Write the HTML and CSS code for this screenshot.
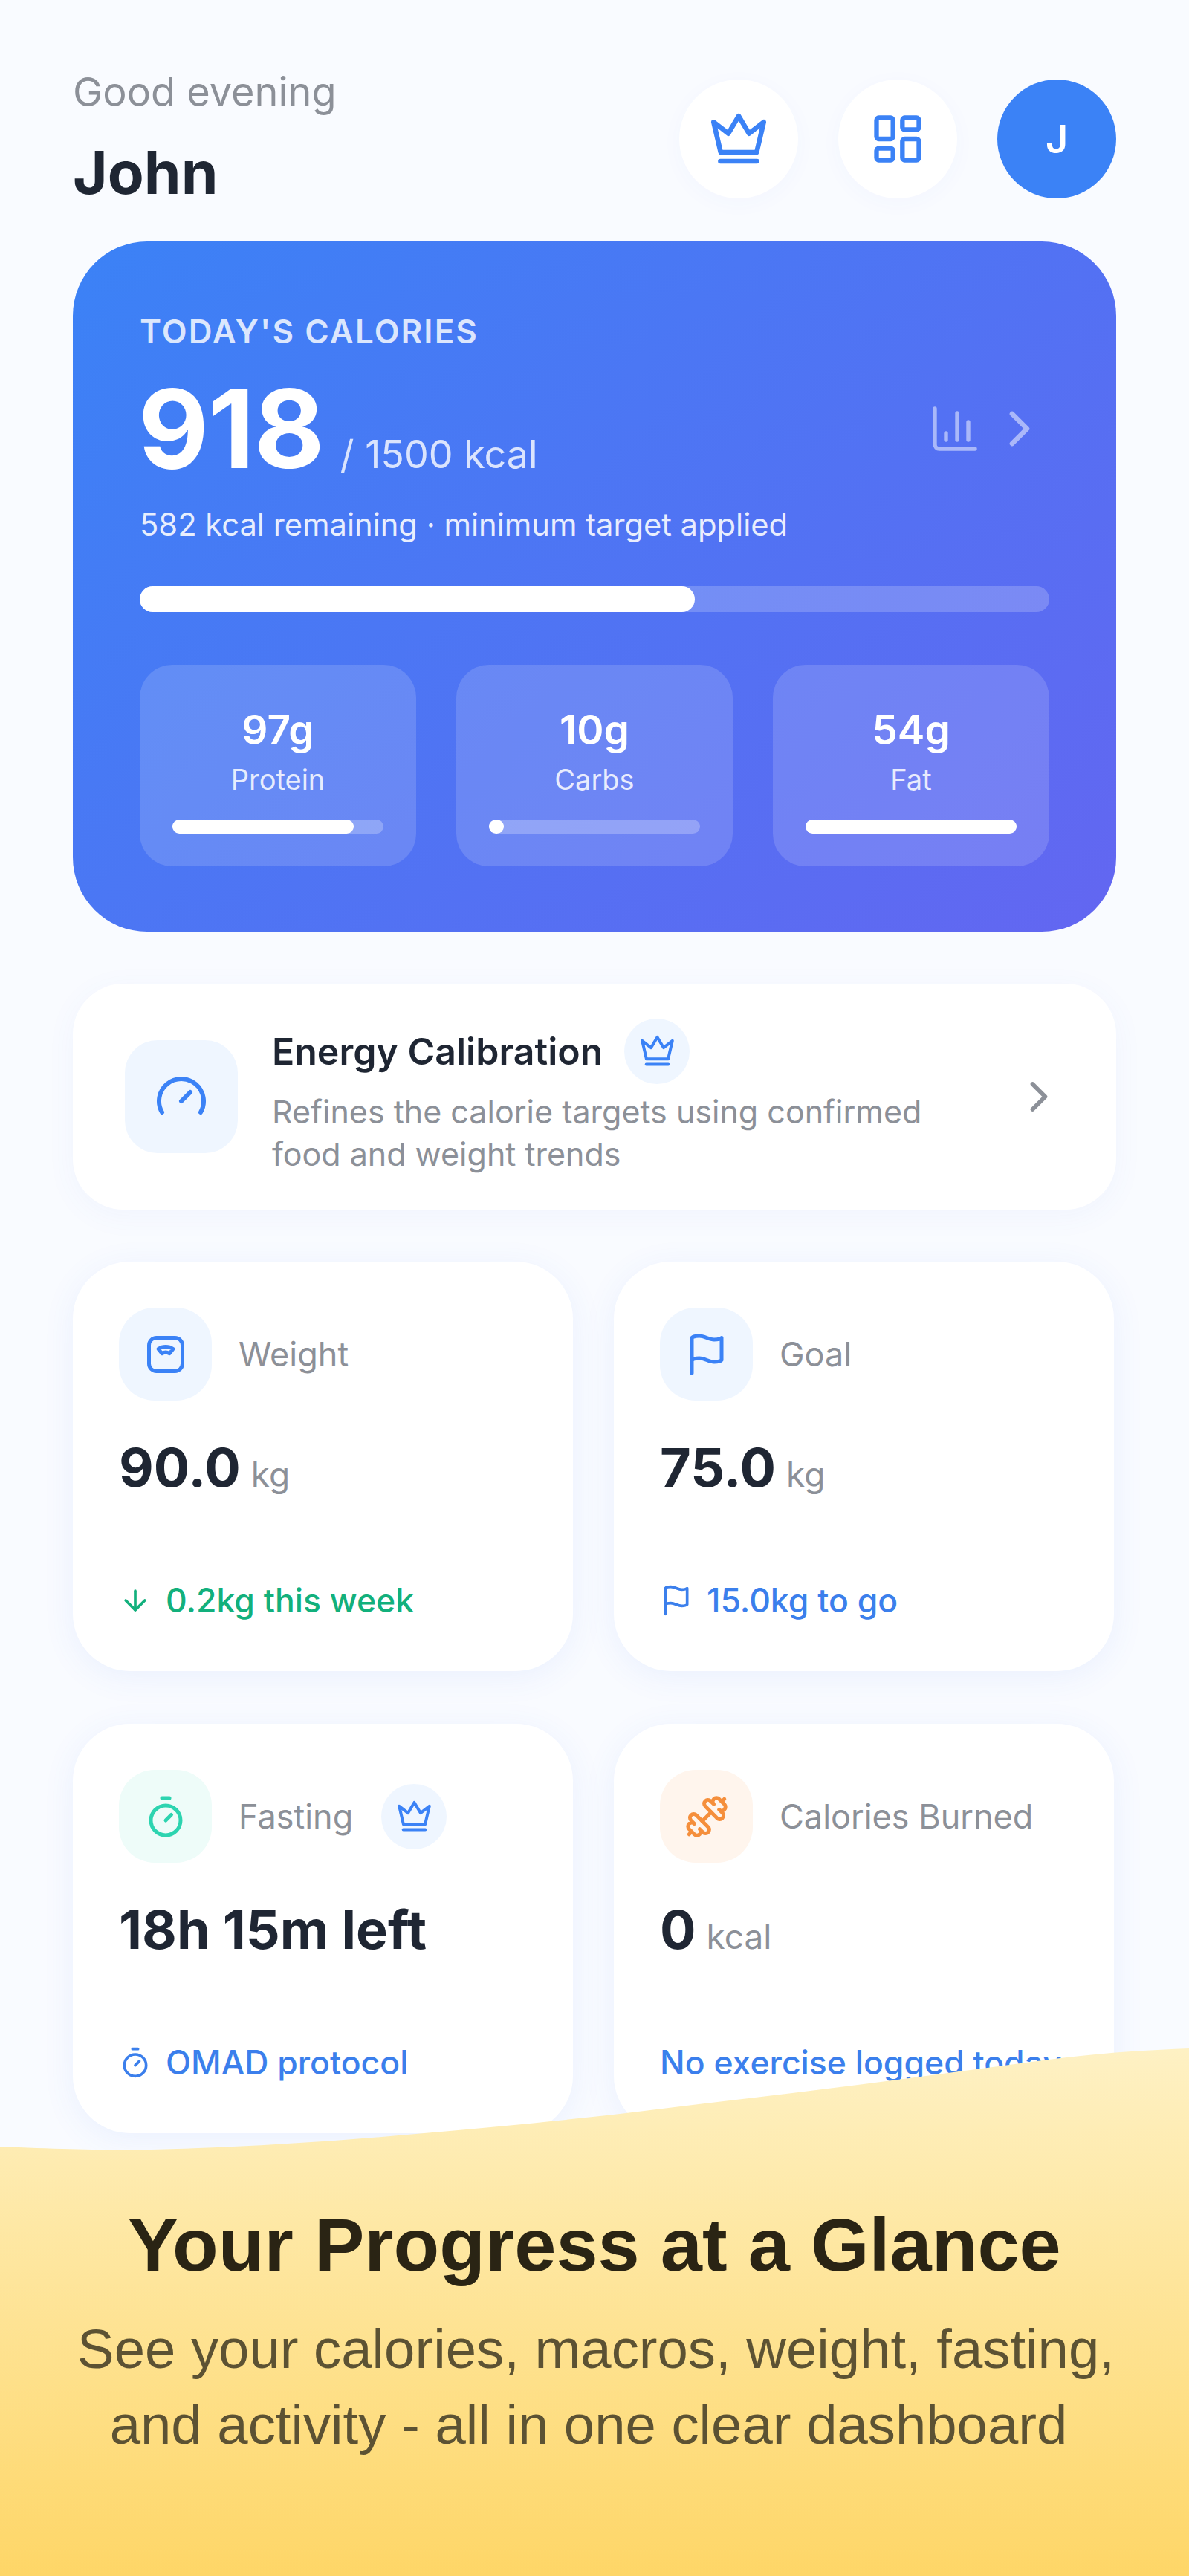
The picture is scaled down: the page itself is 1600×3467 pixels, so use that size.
FILE: index.html
```html
<!DOCTYPE html>
<html lang="en">
<head>
<meta charset="utf-8">
<title>Dashboard</title>
<link rel="stylesheet" href="styles.css">
</head>
<body>
<svg class="sprite" aria-hidden="true">
  <symbol id="i-crown" viewBox="0 0 24 24"><path d="M2.8 5.8 8.2 10 12 3.6 15.8 10l5.4-4.200-2.600 11.100H5.400Z"/><path d="M5.300 20.200h13.400"/></symbol>
  <symbol id="i-layout" viewBox="0 0 24 24"><rect x="3" y="3" width="7" height="9" rx="1"/><rect x="14" y="3" width="7" height="5" rx="1"/><rect x="14" y="12" width="7" height="9" rx="1"/><rect x="3" y="16" width="7" height="5" rx="1"/></symbol>
  <symbol id="i-chart" viewBox="0 0 24 24"><path d="M3 3v16a2 2 0 0 0 2 2h16"/><path d="M18 17V9"/><path d="M13 17V5"/><path d="M8 17v-3"/></symbol>
  <symbol id="i-chevron" viewBox="0 0 24 24"><path d="m9 18 6-6-6-6"/></symbol>
  <symbol id="i-gauge" viewBox="0 0 24 24"><path d="m12 14 4-4"/><path d="M3.340 19a10 10 0 1 1 17.320 0"/></symbol>
  <symbol id="i-scale" viewBox="0 0 24 24"><rect x="3" y="3" width="18" height="18" rx="4"/><path d="M8 9c2.400-1.600 5.600-1.600 8 0l-2 2.500c-1.200-.8-2.800-.8-4 0Z"/></symbol>
  <symbol id="i-flag" viewBox="0 0 24 24"><path d="M4 15s1-1 4-1 5 2 8 2 4-1 4-1V3s-1 1-4 1-5-2-8-2-4 1-4 1z"/><path d="M4 22v-7"/></symbol>
  <symbol id="i-arrow-down" viewBox="0 0 24 24"><path d="M12 5v14"/><path d="m19 12-7 7-7-7"/></symbol>
  <symbol id="i-timer" viewBox="0 0 24 24"><path d="M10 2h4"/><path d="m12 14 3-3"/><circle cx="12" cy="14" r="8"/></symbol>
  <symbol id="i-dumbbell" viewBox="0 0 24 24"><path d="M17.596 12.768a2 2 0 1 0 2.829-2.829l-1.768-1.767a2 2 0 0 0 2.828-2.829l-2.828-2.828a2 2 0 0 0-2.829 2.828l-1.767-1.768a2 2 0 1 0-2.829 2.829z"/><path d="m2.500 21.500 1.400-1.400"/><path d="m20.100 3.900 1.400-1.400"/><path d="M5.343 21.485a2 2 0 1 0 2.829-2.828l1.767 1.768a2 2 0 1 0 2.829-2.829l-6.364-6.364a2 2 0 1 0-2.829 2.829l1.768 1.767a2 2 0 0 0-2.828 2.829z"/><path d="m9.600 14.400 4.800-4.800"/></symbol>
</svg>

<div class="screen">
  <main class="content">
    <header class="top">
      <div class="hello">
        <p class="greeting">Good evening</p>
        <h1 class="name">John</h1>
      </div>
      <div class="top-actions">
        <button class="round-btn"><svg class="icon crown-lg"><use href="#i-crown"/></svg></button>
        <button class="round-btn"><svg class="icon layout-lg"><use href="#i-layout"/></svg></button>
        <div class="avatar">J</div>
      </div>
    </header>

    <section class="hero">
      <h2 class="hero-label">TODAY'S CALORIES</h2>
      <div class="hero-row">
        <div class="hero-count"><span class="hero-num">918</span><span class="hero-unit">/ 1500 kcal</span></div>
        <div class="hero-links">
          <svg class="icon hero-chart"><use href="#i-chart"/></svg>
          <svg class="icon hero-chevron"><use href="#i-chevron"/></svg>
        </div>
      </div>
      <p class="hero-note">582 kcal remaining · minimum target applied</p>
      <div class="hero-track"><div class="hero-fill" style="width:61%"></div></div>
      <div class="macros">
        <div class="macro">
          <span class="macro-val">97g</span><span class="macro-name">Protein</span>
          <div class="macro-track"><div class="macro-fill" style="width:86%"></div></div>
        </div>
        <div class="macro">
          <span class="macro-val">10g</span><span class="macro-name">Carbs</span>
          <div class="macro-track"><div class="macro-fill" style="width:7%"></div></div>
        </div>
        <div class="macro">
          <span class="macro-val">54g</span><span class="macro-name">Fat</span>
          <div class="macro-track"><div class="macro-fill" style="width:100%"></div></div>
        </div>
      </div>
    </section>

    <section class="calibration">
      <div class="cal-icon"><svg class="icon gauge"><use href="#i-gauge"/></svg></div>
      <div class="cal-text">
        <div class="cal-title-row">
          <h3 class="cal-title">Energy Calibration</h3>
          <span class="badge"><svg class="icon crown-sm"><use href="#i-crown"/></svg></span>
        </div>
        <p class="cal-desc">Refines the calorie targets using confirmed food and weight trends</p>
      </div>
      <svg class="icon cal-chevron"><use href="#i-chevron"/></svg>
    </section>

    <section class="stats">
      <article class="stat">
        <div class="stat-head">
          <span class="stat-icon tint-blue"><svg class="icon stat-glyph"><use href="#i-scale"/></svg></span>
          <span class="stat-label">Weight</span>
        </div>
        <p class="stat-value">90.0<span class="stat-unit">kg</span></p>
        <p class="stat-foot foot-green"><svg class="icon foot-glyph"><use href="#i-arrow-down"/></svg>0.2kg this week</p>
      </article>
      <article class="stat">
        <div class="stat-head">
          <span class="stat-icon tint-blue"><svg class="icon stat-glyph"><use href="#i-flag"/></svg></span>
          <span class="stat-label">Goal</span>
        </div>
        <p class="stat-value">75.0<span class="stat-unit">kg</span></p>
        <p class="stat-foot"><svg class="icon foot-glyph"><use href="#i-flag"/></svg>15.0kg to go</p>
      </article>
      <article class="stat">
        <div class="stat-head">
          <span class="stat-icon tint-teal"><svg class="icon stat-glyph"><use href="#i-timer"/></svg></span>
          <span class="stat-label">Fasting</span>
          <span class="badge"><svg class="icon crown-sm"><use href="#i-crown"/></svg></span>
        </div>
        <p class="stat-value">18h 15m left</p>
        <p class="stat-foot"><svg class="icon foot-glyph"><use href="#i-timer"/></svg>OMAD protocol</p>
      </article>
      <article class="stat">
        <div class="stat-head">
          <span class="stat-icon tint-orange"><svg class="icon stat-glyph"><use href="#i-dumbbell"/></svg></span>
          <span class="stat-label">Calories Burned</span>
        </div>
        <p class="stat-value">0<span class="stat-unit">kcal</span></p>
        <p class="stat-foot">No exercise logged today</p>
      </article>
    </section>
  </main>

  <aside class="promo">
    <h2 class="promo-title">Your Progress at a Glance</h2>
    <p class="promo-text">See your calories, macros, weight, fasting,<span class="promo-line">and activity - all in one clear dashboard</span></p>
  </aside>
</div>
</body>
</html>
```

FILE: styles.css
```css
* { box-sizing: border-box; }

html, body { margin: 0; padding: 0; }

body {
  font-family: Inter, "Noto Sans", sans-serif;
  background: #f9fbff;
  color: #1f2633;
}

h1, h2, h3, p { margin: 0; font-weight: inherit; font-size: inherit; }

.sprite { display: none; }

.icon {
  display: block;
  flex: none;
  fill: none;
  stroke: currentColor;
  stroke-width: 2;
  stroke-linecap: round;
  stroke-linejoin: round;
}

.screen {
  position: relative;
  width: 1600px;
  height: 3467px;
  overflow: hidden;
}

.content { padding: 94px 100px 0 98px; }

/* Greeting and top buttons */
.top { display: flex; justify-content: space-between; align-items: flex-start; margin-right: -2px; }
.greeting { font-size: 54px; line-height: 60px; color: #8c9098; }
.name { font-size: 80px; line-height: 96px; font-weight: 700; color: #1f2633; margin-top: 30px; }

.top-actions { display: flex; gap: 54px; margin-top: 13px; }

.round-btn {
  width: 160px;
  height: 160px;
  border: 0;
  padding: 0;
  border-radius: 50%;
  background: #fff;
  color: #3b82f6;
  display: flex;
  align-items: center;
  justify-content: center;
  box-shadow: 0 6px 30px rgba(70, 110, 240, .03);
}

.crown-lg { width: 88px; height: 88px; stroke-width: 1.800; }
.layout-lg { width: 76px; height: 76px; }

.avatar {
  width: 160px;
  height: 160px;
  border-radius: 50%;
  background: #3b82f6;
  color: #fff;
  font-size: 52px;
  font-weight: 600;
  display: flex;
  align-items: center;
  justify-content: center;
}

/* Calorie summary card */
.hero {
  margin: 45px -2px 0 0;
  height: 929px;
  padding: 93px 90px 87px;
  border-radius: 100px;
  background: linear-gradient(135deg, #3b82f6, #6366f1);
  color: #fff;
}

.hero-label {
  font-size: 44px;
  line-height: 56px;
  font-weight: 600;
  letter-spacing: 2.100px;
  color: rgba(255, 255, 255, .82);
}

.hero-row { display: flex; align-items: center; justify-content: space-between; margin-top: 18px; height: 170px; }
.hero-count { display: flex; align-items: baseline; gap: 22px; }
.hero-num { font-size: 146px; line-height: 170px; font-weight: 700; letter-spacing: -1px; margin-left: -2px; }
.hero-unit { font-size: 52px; color: rgba(255, 255, 255, .8); }

.hero-links { display: flex; align-items: center; gap: 11px; color: rgba(255, 255, 255, .5); }
.hero-chart { width: 72px; height: 72px; stroke-width: 1.800; }
.hero-chevron { width: 80px; height: 80px; }

.hero-note { font-size: 41.700px; line-height: 56px; margin-top: 16px; color: rgba(255, 255, 255, .88); }

.hero-track { height: 35px; margin-top: 55px; border-radius: 18px; background: rgba(255, 255, 255, .2); }
.hero-fill { height: 100%; border-radius: 18px; background: #fff; }

.macros { display: grid; grid-template-columns: repeat(3, 1fr); gap: 54px; margin-top: 71px; }

.macro {
  height: 271px;
  padding: 52px 44px 0;
  border-radius: 44px;
  background: rgba(255, 255, 255, .15);
  display: flex;
  flex-direction: column;
  align-items: center;
}

.macro-val { font-size: 55px; line-height: 70px; font-weight: 600; }
.macro-name { font-size: 38px; line-height: 48px; margin-top: 8px; color: rgba(255, 255, 255, .85); }
.macro-track { width: 100%; height: 19px; margin-top: 30px; border-radius: 10px; background: rgba(255, 255, 255, .25); }
.macro-fill { height: 100%; border-radius: 10px; background: #fff; }

/* Energy calibration row */
.calibration {
  display: flex;
  align-items: center;
  height: 304px;
  margin: 70px -2px 0 0;
  padding: 0 70px 0 70px;
  border-radius: 68px;
  background: #fff;
  box-shadow: 0 8px 40px rgba(70, 110, 240, .05);
}

.cal-icon {
  width: 152px;
  height: 152px;
  flex: none;
  border-radius: 44px;
  background: #eff6ff;
  color: #3b82f6;
  display: flex;
  align-items: center;
  justify-content: center;
}

.gauge { width: 72px; height: 72px; }

.cal-text { margin-left: 46px; width: 920px; }
.cal-title-row { display: flex; align-items: center; gap: 29px; }
.cal-title { font-size: 50px; line-height: 60px; font-weight: 600; color: #1f2633; }
.cal-desc { font-size: 43px; line-height: 57px; margin-top: 9px; color: #8c9098; }
.cal-chevron { width: 68px; height: 68px; margin-left: auto; color: #8c9098; }

.badge {
  width: 88px;
  height: 88px;
  flex: none;
  border-radius: 50%;
  background: #eff6ff;
  color: #3b82f6;
  display: flex;
  align-items: center;
  justify-content: center;
}

.crown-sm { width: 53px; height: 53px; stroke-width: 1.800; }

/* Metric cards */
.stats { display: grid; grid-template-columns: 673px 673px; gap: 71px 55px; margin-top: 70px; }

.stat {
  height: 551px;
  padding: 62px 62px 65px;
  border-radius: 77px;
  background: #fff;
  box-shadow: 0 8px 44px rgba(70, 110, 240, .08);
  display: flex;
  flex-direction: column;
}

.stat-head { display: flex; align-items: center; height: 125px; }
.stat-icon {
  width: 125px;
  height: 125px;
  flex: none;
  border-radius: 48px;
  display: flex;
  align-items: center;
  justify-content: center;
}
.stat-glyph { width: 60px; height: 60px; }
.tint-blue { background: #eff6ff; color: #3b82f6; }
.tint-teal { background: #eefcf9; color: #2dd4b0; }
.tint-orange { background: #fff5ed; color: #f58f3c; }

.stat-label { font-size: 45px; color: #8c9098; margin-left: 36px; }
.stat-head .badge { margin-left: 38px; }

.stat-value { font-size: 72px; line-height: 88px; font-weight: 700; color: #1f2633; margin-top: 46px; white-space: nowrap; }
.stat-unit { font-size: 46px; font-weight: 400; color: #8c9098; margin-left: 14px; }

.stat-foot {
  display: flex;
  align-items: center;
  gap: 19px;
  margin-top: auto;
  font-size: 44.500px;
  font-weight: 500;
  line-height: 60px;
  color: #3b7fec;
  white-space: nowrap;
}
.foot-green { color: #12b07c; }
.foot-glyph { width: 44px; height: 44px; }

/* Yellow promo banner laid over the bottom of the screen */
.promo {
  position: absolute;
  left: 0;
  right: 0;
  bottom: 0;
  height: 710px;
  padding-top: 204px;
  text-align: center;
  font-family: "Liberation Sans", Arial, sans-serif;
  background: linear-gradient(#fef1c4, #fed667);
  clip-path: path("M0 132C90 136 160 137 204 136C330 133 450 125 571 114C680 104 770 96 867 84C980 70 1095 57 1208 42C1285 32 1355 22 1427 13C1485 6 1545 2 1600 0L1600 710L0 710Z");
}

.promo-title { font-size: 101px; line-height: 120px; font-weight: 700; color: #2a2414; }
.promo-text { font-size: 74.300px; line-height: 102px; margin-top: 30px; padding-left: 4px; color: #5c5233; }
.promo-line { display: block; padding-right: 20px; }
```
